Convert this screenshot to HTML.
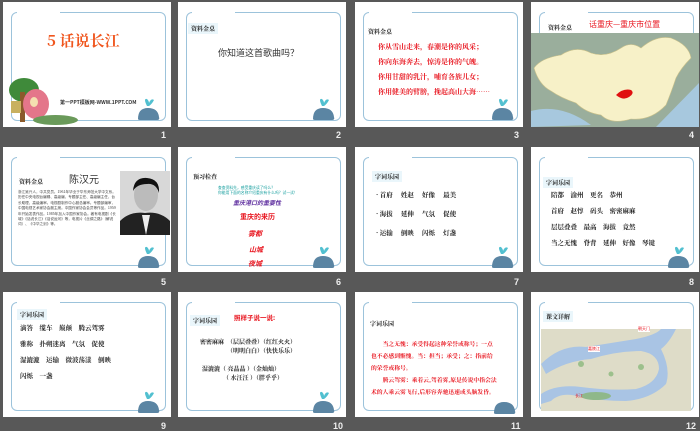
<!DOCTYPE html>
<html><head><meta charset="utf-8"><style>
*{margin:0;padding:0;box-sizing:border-box}
body{width:700px;height:431px;background:#585858;position:relative;overflow:hidden;font-family:"Liberation Sans","Noto Sans CJK SC",sans-serif}
.s{position:absolute;width:168px;height:125px;background:#fff;overflow:hidden}
.f{position:absolute;left:8px;top:10px;width:155px;height:109px;border:1.5px solid #9cc3db;border-radius:6px}
.g{position:absolute;left:14px;top:8px;width:43px;height:5px;background:#fff}
.n{position:absolute;color:#eee;font-size:9px;font-weight:bold}
.t{position:absolute;font-family:"Noto Serif CJK SC",serif;font-size:6px;font-weight:bold;color:#222;background:#eaf6fb;padding:1px 3px}
.a{position:absolute;white-space:nowrap;font-family:"Noto Sans CJK SC",sans-serif}
.w{position:absolute;width:24px;height:26px}
</style></head><body>

<div class="s" style="left:3px;top:2px">
 <div class="f"></div><div class="g"></div>
 <div class="a" style="left:44px;top:28px;color:#f0561e;font-size:15px;font-weight:bold;font-family:'Noto Serif CJK SC',serif">5 话说长江</div>
 <div style="position:absolute;left:6px;top:76px;width:30px;height:24px;border-radius:50%;background:#3f8a3a"></div>
 <div style="position:absolute;left:17px;top:90px;width:5px;height:30px;background:#8b5a2b"></div>
 <div style="position:absolute;left:20px;top:87px;width:26px;height:30px;border-radius:50%;background:#e4768a"></div>
 <div style="position:absolute;left:27px;top:95px;width:8px;height:10px;border-radius:50%;background:#f4e0b0"></div>
 <div style="position:absolute;left:8px;top:99px;width:10px;height:12px;background:#c8b060"></div>
 <div style="position:absolute;left:30px;top:113px;width:45px;height:10px;border-radius:50%;background:#6a9a5a"></div>
 <div class="a" style="left:57px;top:97px;font-size:5px;font-weight:bold;color:#333">第一PPT模板网-WWW.1PPT.COM</div>
 <svg class="w" style="left:134px;top:93px" viewBox="0 0 24 26"><path d="M1 24 Q1 13 11 13 Q21 13 22 22 Q23 25 20 25 L4 25 Q1 25 1 24Z" fill="#5b85a3"/><path d="M10 11 Q6 3 10 4 Q12 6 12 8 Q14 3 17 5 Q15 9 12 11Z" fill="#52c0d0"/></svg>
</div>
<div class="n" style="left:161px;top:130px">1</div>

<div class="s" style="left:178px;top:2px">
 <div class="f"></div><div class="g"></div>
 <div class="t" style="left:10px;top:21px">资料金桌</div>
 <div class="a" style="left:40px;top:44px;font-size:9px;color:#333">你知道这首歌曲吗？</div>
 <svg class="w" style="left:134px;top:93px" viewBox="0 0 24 26"><path d="M1 24 Q1 13 11 13 Q21 13 22 22 Q23 25 20 25 L4 25 Q1 25 1 24Z" fill="#5b85a3"/><path d="M10 11 Q6 3 10 4 Q12 6 12 8 Q14 3 17 5 Q15 9 12 11Z" fill="#52c0d0"/></svg>
</div>
<div class="n" style="left:336px;top:130px">2</div>

<div class="s" style="left:355px;top:2px">
 <div class="f"></div><div class="g"></div>
 <div class="t" style="left:10px;top:24px;background:none">资料金桌</div>
 <div class="a" style="left:23px;top:38px;font-size:7px;font-weight:bold;color:#e8141e;line-height:15px;font-family:'Noto Serif CJK SC',serif">你从雪山走来，春潮是你的风采；<br>你向东海奔去，惊涛是你的气魄。<br>你用甘甜的乳汁，哺育各族儿女；<br>你用健美的臂膀，挽起高山大海……</div>
 <svg class="w" style="left:136px;top:93px" viewBox="0 0 24 26"><path d="M1 24 Q1 13 11 13 Q21 13 22 22 Q23 25 20 25 L4 25 Q1 25 1 24Z" fill="#5b85a3"/><path d="M10 11 Q6 3 10 4 Q12 6 12 8 Q14 3 17 5 Q15 9 12 11Z" fill="#52c0d0"/></svg>
</div>
<div class="n" style="left:514px;top:130px">3</div>

<div class="s" style="left:531px;top:2px">
 <div class="f"></div><div class="g"></div>
 <div class="t" style="left:14px;top:20px;background:none">资料金桌</div>
 <div class="a" style="left:58px;top:17px;font-size:8px;color:#e8141e">话重庆—重庆市位置</div>
 <svg style="position:absolute;left:0;top:31px" width="168" height="94" viewBox="0 0 168 94"><rect width="168" height="94" fill="#9aae9c"/><path d="M0 78 Q30 70 60 92 L0 94Z" fill="#a7c8de"/><path d="M125 94 L168 50 L168 94Z" fill="#a7c8de"/><path d="M3 35 Q10 25 30 22 Q45 12 60 20 Q75 25 90 15 Q100 8 110 15 Q125 2 140 5 Q158 12 160 25 Q150 35 145 45 Q140 60 135 72 Q120 88 100 86 Q80 92 70 82 Q55 80 45 70 Q30 65 20 58 Q8 52 3 35Z" fill="#f7f1c8" stroke="#c8c08a" stroke-width=".6"/><path d="M85 62 Q92 55 100 57 Q104 60 98 64 Q92 68 85 62Z" fill="#e01010"/></svg>
</div>
<div class="n" style="left:689px;top:130px">4</div>

<div class="s" style="left:3px;top:147px">
 <div class="f"></div><div class="g"></div>
 <div class="t" style="left:13px;top:29px;background:none">资料金桌</div>
 <div class="a" style="left:66px;top:24px;font-size:10px;color:#333">陈汉元</div>
 <div style="position:absolute;left:15px;top:43px;width:100px;height:70px;font-size:3.6px;line-height:5.4px;color:#444;font-family:'Noto Sans CJK SC',sans-serif;word-break:break-all">浙江吴兴人，中共党员。1961年毕业于华东师范大学中文系。历任中央电视台编辑、高级编、专题部主任、高级编主任，台长助理，高级编审。电视剧制作中心副总编审。专题部编审，中国电视艺术家协会副主席。中国作家协会会员等作品。1959年开始发表作品。1985年加入中国作家协会。著有电视剧《长城》《话说长江》《话说运河》等，电视片《丝绸之路》（解说词）、《中华之剑》等。</div>
 <svg style="position:absolute;left:117px;top:24px" width="50" height="64" viewBox="0 0 50 64"><rect width="50" height="64" fill="#d8d8d8"/><path d="M0 64 L0 50 Q10 40 25 42 Q40 40 50 50 L50 64Z" fill="#222"/><ellipse cx="26" cy="24" rx="12" ry="16" fill="#bbb"/><path d="M13 20 Q14 6 27 7 Q40 8 39 22 Q36 12 27 13 Q17 13 13 20Z" fill="#111"/><path d="M22 44 L26 64 L30 44Z" fill="#eee"/></svg>
 <svg class="w" style="left:134px;top:96px" viewBox="0 0 24 26"><path d="M1 24 Q1 13 11 13 Q21 13 22 22 Q23 25 20 25 L4 25 Q1 25 1 24Z" fill="#5b85a3"/><path d="M10 11 Q6 3 10 4 Q12 6 12 8 Q14 3 17 5 Q15 9 12 11Z" fill="#52c0d0"/></svg>
</div>
<div class="n" style="left:161px;top:277px">5</div>

<div class="s" style="left:178px;top:147px">
 <div class="f"></div><div class="g"></div>
 <div class="t" style="left:12px;top:24px;background:none">预习检查</div>
 <div class="a" style="left:40px;top:39px;font-size:3.8px;line-height:5px;color:#1aa0a0">查查资料先，感受重庆读了吗么？<br>你能用下面的名称介绍重庆有什么吗？试一试！</div>
 <div class="a" style="left:55px;top:51px;font-size:6px;font-weight:bold;font-style:italic;color:#6030a0">重庆港口的重要性</div>
 <div class="a" style="left:62px;top:65px;font-size:7px;font-weight:bold;color:#e8141e">重庆的来历</div>
 <div class="a" style="left:70px;top:82px;font-size:7px;font-weight:bold;font-style:italic;color:#e8141e">雾都</div>
 <div class="a" style="left:71px;top:98px;font-size:7px;font-weight:bold;font-style:italic;color:#e8141e">山城</div>
 <div class="a" style="left:70px;top:112px;font-size:7px;font-weight:bold;font-style:italic;color:#e8141e">夜城</div>
 <svg class="w" style="left:134px;top:96px" viewBox="0 0 24 26"><path d="M1 24 Q1 13 11 13 Q21 13 22 22 Q23 25 20 25 L4 25 Q1 25 1 24Z" fill="#5b85a3"/><path d="M10 11 Q6 3 10 4 Q12 6 12 8 Q14 3 17 5 Q15 9 12 11Z" fill="#52c0d0"/></svg>
</div>
<div class="n" style="left:336px;top:277px">6</div>

<div class="s" style="left:355px;top:147px">
 <div class="f"></div><div class="g"></div>
 <div class="t" style="left:17px;top:24px">字词乐园</div>
 <div class="a" style="left:21px;top:38px;font-size:6.5px;font-weight:bold;color:#222;line-height:19px;font-family:'Noto Serif CJK SC',serif">· 首府　 姓赵　 好像　 最美<br>· 海拔　 延伸　 气氛　 促使<br>· 运输　 倒映　 闪烁　 灯盏</div>
 <svg class="w" style="left:136px;top:96px" viewBox="0 0 24 26"><path d="M1 24 Q1 13 11 13 Q21 13 22 22 Q23 25 20 25 L4 25 Q1 25 1 24Z" fill="#5b85a3"/><path d="M10 11 Q6 3 10 4 Q12 6 12 8 Q14 3 17 5 Q15 9 12 11Z" fill="#52c0d0"/></svg>
</div>
<div class="n" style="left:514px;top:277px">7</div>

<div class="s" style="left:531px;top:147px">
 <div class="f"></div><div class="g"></div>
 <div class="t" style="left:12px;top:30px">字词乐园</div>
 <div class="a" style="left:20px;top:40px;font-size:6.5px;font-weight:bold;color:#222;line-height:16px;font-family:'Noto Serif CJK SC',serif">陪都　渝州　更名　恭州<br>首府　赵惇　码头　密密麻麻<br>层层叠叠　最高　海拔　竟然<br>当之无愧　脊背　延伸　好像　琴键</div>
 <svg class="w" style="left:136px;top:96px" viewBox="0 0 24 26"><path d="M1 24 Q1 13 11 13 Q21 13 22 22 Q23 25 20 25 L4 25 Q1 25 1 24Z" fill="#5b85a3"/><path d="M10 11 Q6 3 10 4 Q12 6 12 8 Q14 3 17 5 Q15 9 12 11Z" fill="#52c0d0"/></svg>
</div>
<div class="n" style="left:689px;top:277px">8</div>

<div class="s" style="left:3px;top:292px">
 <div class="f"></div><div class="g"></div>
 <div class="t" style="left:14px;top:17px">字词乐园</div>
 <div class="a" style="left:17px;top:28px;font-size:6.5px;font-weight:bold;color:#222;line-height:16px;font-family:'Noto Serif CJK SC',serif">滴答　缆车　巅颠　腾云驾雾<br>雅称　扑朔迷离　气氛　促使<br>湿漉漉　运输　微波荡漾　倒映<br>闪烁　一盏</div>
 <svg class="w" style="left:134px;top:96px" viewBox="0 0 24 26"><path d="M1 24 Q1 13 11 13 Q21 13 22 22 Q23 25 20 25 L4 25 Q1 25 1 24Z" fill="#5b85a3"/><path d="M10 11 Q6 3 10 4 Q12 6 12 8 Q14 3 17 5 Q15 9 12 11Z" fill="#52c0d0"/></svg>
</div>
<div class="n" style="left:161px;top:421px">9</div>

<div class="s" style="left:178px;top:292px">
 <div class="f"></div><div class="g"></div>
 <div class="t" style="left:12px;top:23px">字词乐园</div>
 <div class="a" style="left:56px;top:20px;font-size:6.5px;font-weight:bold;color:#e8141e">照样子说一说:</div>
 <div class="a" style="left:22px;top:46px;font-size:6px;font-weight:bold;color:#222;line-height:8.5px;font-family:'Noto Serif CJK SC',serif">密密麻麻　（层层叠叠）（红红火火）<br>　　　　　（明明白白）（快快乐乐）</div>
 <div class="a" style="left:24px;top:73px;font-size:6px;font-weight:bold;color:#222;line-height:8.5px;font-family:'Noto Serif CJK SC',serif">湿漉漉（ 亮晶晶 ）（金灿灿）<br>　　　　（ 水汪汪 ）（胖乎乎）</div>
 <svg class="w" style="left:134px;top:96px" viewBox="0 0 24 26"><path d="M1 24 Q1 13 11 13 Q21 13 22 22 Q23 25 20 25 L4 25 Q1 25 1 24Z" fill="#5b85a3"/><path d="M10 11 Q6 3 10 4 Q12 6 12 8 Q14 3 17 5 Q15 9 12 11Z" fill="#52c0d0"/></svg>
</div>
<div class="n" style="left:333px;top:421px">10</div>

<div class="s" style="left:355px;top:292px">
 <div class="f"></div><div class="g"></div>
 <div class="t" style="left:12px;top:26px;background:none">字词乐园</div>
 <div class="a" style="left:16px;top:46px;font-size:5.8px;font-weight:bold;color:#e8141e;line-height:12px;font-family:'Noto Serif CJK SC',serif">　　当之无愧：承受得起这种荣誉或称号；一点<br>也不必感到惭愧。当：担当；承受；之：指前给<br>的荣誉或称号。<br>　　腾云驾雾：乘着云,驾着雾,原是传说中指会法<br>术的人乘云雾飞行,后形容奔驰迅速或头脑发昏。</div>
 <svg class="w" style="left:138px;top:97px" viewBox="0 0 24 26"><path d="M1 24 Q1 13 11 13 Q21 13 22 22 Q23 25 20 25 L4 25 Q1 25 1 24Z" fill="#5b85a3"/></svg>
</div>
<div class="n" style="left:511px;top:421px">11</div>

<div class="s" style="left:531px;top:292px">
 <div class="f"></div><div class="g"></div>
 <div class="t" style="left:12px;top:19px">课文详解</div>
 <svg style="position:absolute;left:10px;top:37px" width="150" height="82" viewBox="0 0 150 82"><rect width="150" height="82" fill="#dedcc8"/><path d="M0 35 Q20 15 45 18 Q70 14 95 10 Q115 6 120 0 L135 0 Q128 14 120 20 Q130 40 125 55 Q110 70 85 72 Q60 72 40 68 Q20 62 10 72 L0 75 L0 65 Q15 55 40 58 Q70 62 95 60 Q115 55 118 40 Q118 25 100 22 Q75 22 50 30 Q25 32 5 45Z" fill="#a9c4e4"/><ellipse cx="55" cy="67" rx="15" ry="4" fill="#8fb88a"/><circle cx="40" cy="35" r="3" fill="#9cc08c"/><circle cx="70" cy="45" r="2.5" fill="#9cc08c"/><circle cx="100" cy="38" r="3" fill="#9cc08c"/></svg>
 <div class="a" style="left:107px;top:34px;font-size:4px;color:#e8141e;background:#fff">朝天门</div>
 <div class="a" style="left:57px;top:54px;font-size:4px;color:#e8141e;background:#fff">嘉陵江</div>
 <div class="a" style="left:44px;top:101px;font-size:4px;color:#e8141e">长江</div>
</div>
<div class="n" style="left:686px;top:421px">12</div>

</body></html>
